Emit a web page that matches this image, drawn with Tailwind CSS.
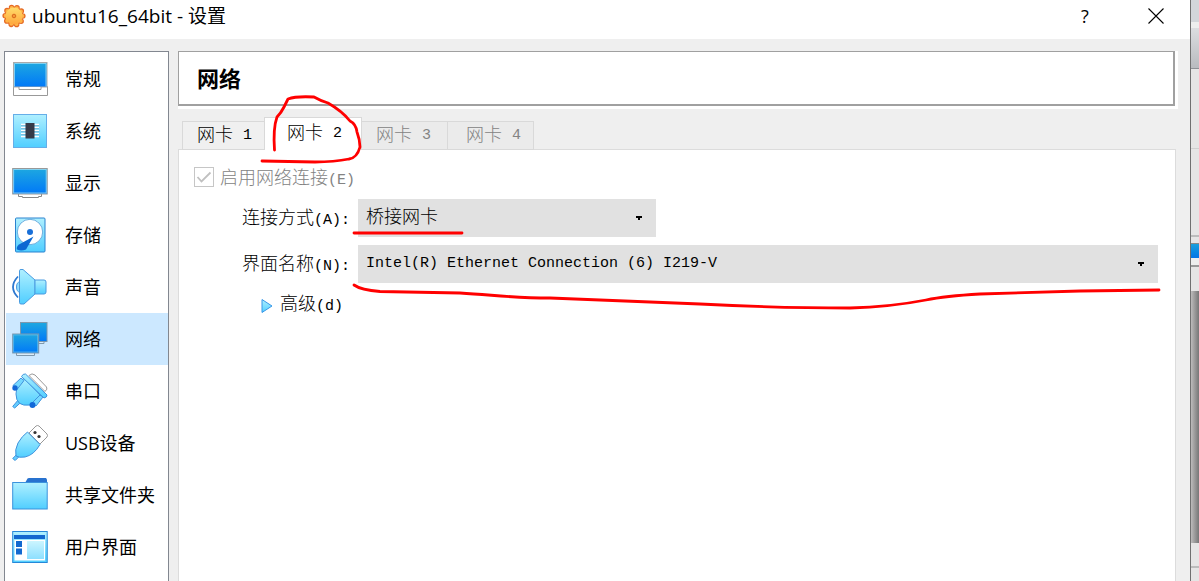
<!DOCTYPE html>
<html lang="zh-CN">
<head>
<meta charset="utf-8">
<title>ubuntu16_64bit - 设置</title>
<script src="https://cdn.jsdelivr.net/npm/@tailwindcss/browser@4"></script>
</head>
<body class="flex h-screen overflow-hidden bg-[#efefef] font-['Open_Sans','Noto_Sans_CJK_SC',sans-serif] text-lg leading-6 text-black">
<svg class="absolute size-0" aria-hidden="true">
  <defs>
    <linearGradient id="light" x1="0" y1="0" x2="0" y2="1"><stop offset="0" stop-color="#b0f0ff"/><stop offset="1" stop-color="#50ceff"/></linearGradient>
    <linearGradient id="screen" x1="0" y1="0" x2="0" y2="1"><stop offset="0" stop-color="#1ea8e0"/><stop offset="1" stop-color="#0078f8"/></linearGradient>
    <linearGradient id="gear" x1="0" y1="0" x2="0" y2="1"><stop offset="0" stop-color="#ffdc6a"/><stop offset="1" stop-color="#ffa63c"/></linearGradient>
  </defs>
</svg>

<div class="relative flex min-w-0 flex-1 flex-col border-r border-[#707070]">
  <header class="flex h-[39px] shrink-0 items-center bg-white pr-[26px] pb-2 pl-0.5">
    <svg class="mr-1.5 size-6" viewBox="0 0 24 24">
      <circle cx="12" cy="12" r="8.800" fill="none" stroke="#e56a25" stroke-width="5.600" stroke-linecap="round" stroke-dasharray="0 5.529"/>
      <circle cx="12" cy="12" r="8.300" fill="none" stroke="#ffb347" stroke-width="4" stroke-linecap="round" stroke-dasharray="0 5.215"/>
      <circle cx="12" cy="12" r="8.500" fill="url(#gear)"/>
      <circle cx="12" cy="12" r="1.800" fill="#f59a35" stroke="#d9661d"/>
    </svg>
    <h1 class="flex-1 text-[19px]">ubuntu16_64bit - 设置</h1>
    <button class="mr-[55px] w-4 text-center" aria-label="帮助">?</button>
    <button aria-label="关闭"><svg class="size-4" viewBox="0 0 16 16" fill="none" stroke="#000" stroke-width="1.1"><path d="M.5.5l15 15M15.5.5l-15 15"/></svg></button>
  </header>

  <div class="flex min-h-0 flex-1 pt-3 pl-1">
    <nav class="w-[165px] shrink-0 border border-b-0 border-[#828790] bg-white px-px pt-px pr-0">
      <a href="#general" class="flex h-[52px] items-center gap-[17px] pl-1.5"><svg class="size-9" viewBox="0 0 36 36"><path d="M1.500 25.500h34v9h-34z" fill="#fff" stroke="#999"/><rect x="1.500" y="1.500" width="33.500" height="24.500" fill="url(#screen)" stroke="#aaa"/><path d="M2.500 25.500V2.500H34V25.500" fill="none" stroke="#9adcf5" stroke-width=".8"/><path d="M7 26v2.500h22V26" fill="#fff" stroke="#999"/></svg>常规</a>
      <a href="#system" class="flex h-[52px] items-center gap-[17px] pl-1.5"><svg class="size-9" viewBox="0 0 36 36"><rect x="1.500" y="1.500" width="33" height="33" fill="url(#light)" stroke="#66aee8"/><path d="M9 11.500h18M9 14.500h18M9 17.500h18M9 20.500h18M9 23.500h18" stroke="#fff" stroke-width="1.600"/><path d="M9 12.700h18M9 15.700h18M9 18.700h18M9 21.700h18" stroke="#65a9ce" stroke-width=".8"/><rect x="13.500" y="10" width="9" height="15.500" fill="#343a48"/></svg>系统</a>
      <a href="#display" class="flex h-[52px] items-center gap-[17px] pl-1.5"><svg class="size-9" viewBox="0 0 36 36"><path d="M6.500 28.500v3h4v1h16v-1h3v-3" fill="#fff" stroke="#888"/><rect x=".7" y="3.500" width="34.500" height="25.500" fill="url(#screen)" stroke="#999"/><rect x="1.700" y="4.500" width="32.500" height="23.500" fill="none" stroke="#9adcf5" stroke-width=".8"/></svg>显示</a>
      <a href="#storage" class="flex h-[52px] items-center gap-[17px] pl-1.5"><svg class="size-9" viewBox="0 0 36 36"><rect x="3.500" y="1" width="29.500" height="34" rx="1" fill="url(#light)" stroke="#2b82cf"/><circle cx="18" cy="15" r="12.700" fill="#fff" stroke="#6aaee0"/><circle cx="18" cy="15" r="3" fill="#186fd8"/><path d="M21.500 19.500L7 27.500Q4 30 5 32.500Q9 34.500 14 32.500Z" fill="#0b68d2"/></svg>存储</a>
      <a href="#audio" class="flex h-[52px] items-center gap-[17px] pl-1.5"><svg class="size-9" viewBox="0 0 36 36" stroke="#4a9be0"><path d="M6 7.500Q-4 18 6 28.500" fill="none" stroke="#2d78d0" stroke-width="1.700"/><path d="M8 13Q4.500 13 4.500 18T8 23z" fill="#8fdcff"/><path d="M7.500 1.500Q7.500.5 9 .5h2L23 11v14L12 35H9Q7.500 35 7.500 33.500z" fill="url(#light)"/><path d="M23 11h9q2 0 2 2v10q0 2-2 2h-9z" fill="url(#light)"/></svg>声音</a>
      <a href="#network" aria-current="page" class="flex h-[52px] items-center gap-[17px] bg-[#cce8ff] pl-1.5"><svg class="size-9" viewBox="0 0 36 36" stroke="#7e98ad"><path d="M14 20v2.500h18V20" fill="#d8ecfa"/><rect x="8.500" y="1.500" width="26.500" height="19" fill="url(#screen)"/><path d="M4.500 32v2.500h18V32" fill="#d8ecfa"/><rect x=".7" y="13" width="26" height="19" fill="url(#screen)"/><rect x="1.700" y="14" width="24" height="17" fill="none" stroke="#65bfea" stroke-width=".7"/></svg>网络</a>
      <a href="#serial" class="flex h-[52px] items-center gap-[17px] pl-1.5"><svg class="size-9" viewBox="0 0 36 36" stroke="#3f93dd"><path d="M17 2.500q3-3 6-.5l11.500 12q1.500 2-1.500 4.500z" fill="#fff" stroke="#999"/><path d="M.7 33.500l5-6 2.500 2.500-5.500 5z" fill="#65ceff"/><path d="M12 5L29 23Q27 31 18 32Q4 34 4 21Q4 13 12 5z" fill="url(#light)"/><path d="M1 12.500l8-7.500 3 2.500-7 9z" fill="#75d8ff"/><path d="M20 30l8-8 3 2-7 9z" fill="#75d8ff"/><path d="M9.500 3.500q1.500-3 4-2.500L35 22q0 2.500-3 3z" fill="url(#light)"/><circle cx="3" cy="15" r="2.700" fill="#1268d8" stroke="none"/><circle cx="20.500" cy="32" r="3" fill="#1268d8" stroke="none"/></svg>串口</a>
      <a href="#usb" class="flex h-[52px] items-center gap-[17px] pl-1.5"><svg class="size-9" viewBox="0 0 36 36" stroke="#3f93dd"><path d="M17 8l7-7q1.500-1 3 0l8 8q1 1.500 0 3l-7 7z" fill="#fff" stroke="#999"/><circle cx="23" cy="7.500" r="1.600" fill="#333" stroke="none"/><circle cx="27" cy="11.500" r="1.600" fill="#333" stroke="none"/><path d="M.7 33.500l4-4 2.500 2-4 4z" fill="#65ceff"/><path d="M15.500 7L28 19.500Q22 30 13 32Q7 33 4 31Q2.500 25 6 18Q10 11 15.500 7z" fill="url(#light)"/></svg>USB设备</a>
      <a href="#shared" class="flex h-[52px] items-center gap-[17px] pl-1.5"><svg class="size-9" viewBox="0 0 36 36"><path d="M13 6l2.500-4.500Q16 1 17 1h17l1 1.500V7H13z" fill="#2872cf"/><rect x=".7" y="5.500" width="34.500" height="26.500" fill="url(#light)" stroke="#3b92dc"/></svg>共享文件夹</a>
      <a href="#interface" class="flex h-[52px] items-center gap-[17px] pl-1.5"><svg class="size-9" viewBox="0 0 36 36"><rect x=".7" y="2.500" width="34.500" height="31" fill="url(#light)" stroke="#2688d8"/><path d="M2.500 11h30.500v20.500H2.500z" fill="#fff"/><path d="M2 6h31v4H2zM4 12h6v6H4zM4 19.500h6v6H4z" fill="#1268cf"/><path d="M15 12h17v18H15z" fill="url(#light)" opacity=".65"/></svg>用户界面</a>
    </nav>

    <main class="ml-[9px] flex min-w-0 flex-1 flex-col pr-3">
      <div class="shrink-0 bg-white pr-[3px] pb-[3px]">
        <h2 class="border-t border-r-2 border-b-2 border-l border-[#a0a0a0] py-[13px] pl-[18px] text-[22px] leading-[26px] font-bold">网络</h2>
      </div>

      <div class="mr-0.5 flex min-h-0 flex-1 flex-col pt-2 font-['Liberation_Mono','Noto_Sans_CJK_SC',monospace] font-light">
        <div role="tablist" class="z-10 -mb-px flex items-end pl-1">
          <button role="tab" class="flex h-[29px] w-[82px] items-center gap-2.5 border border-r-0 border-[#d9d9d9] bg-[#f0f0f0] pl-3.5">网卡 <span class="text-[15px]">1</span></button>
          <button role="tab" aria-selected="true" class="flex h-[33px] w-[98px] items-center gap-2.5 border border-b-0 border-[#d9d9d9] bg-white pl-[22px]">网卡 <span class="text-[15px]">2</span></button>
          <button role="tab" disabled class="flex h-[29px] w-[86px] items-center gap-2.5 border border-l-0 border-[#d9d9d9] bg-[#ebebeb] pl-3.5 text-[#838383]">网卡 <span class="text-[15px]">3</span></button>
          <button role="tab" disabled class="flex h-[29px] w-[86px] items-center gap-2.5 border border-l-0 border-[#d9d9d9] bg-[#ebebeb] pl-[18px] text-[#838383]">网卡 <span class="text-[15px]">4</span></button>
        </div>

        <section class="flex flex-1 flex-col border border-b-0 border-[#dcdcdc] bg-white pt-[17px] pr-[17px] pl-[15px]">
          <label class="flex items-start gap-1.5 text-[#838383]">
            <span class="grid size-5 place-items-center">
              <input type="checkbox" checked disabled class="col-start-1 row-start-1 size-5 appearance-none border border-[#c6c6c6] bg-white">
              <svg class="col-start-1 row-start-1 size-4" viewBox="0 0 16 16" fill="none" stroke="#c0c0c0" stroke-width="1.800"><path d="M1.500 8l4 4.500 9-9"/></svg>
            </span>
            <span>启用网络连接<span class="text-[15px]">(E)</span></span>
          </label>

          <div class="mt-1.5 grid grid-cols-[107px_1fr] items-center gap-x-[9px] gap-y-2 pl-12">
            <label for="attached" class="pt-1 whitespace-nowrap">连接方式<span class="text-[15px]">(A):</span></label>
            <div class="grid w-[298px] items-center">
              <select id="attached" class="col-start-1 row-start-1 h-[38px] appearance-none bg-[#e1e1e1] pl-2"><option>桥接网卡</option></select>
              <svg class="pointer-events-none col-start-1 row-start-1 mr-3.5 h-1 w-1.5 justify-self-end" viewBox="0 0 6 4"><path d="M0 0h6v2H4v2H2V2H0z"/></svg>
            </div>
            <label for="adapter" class="pt-1 whitespace-nowrap">界面名称<span class="text-[15px]">(N):</span></label>
            <div class="grid items-center">
              <select id="adapter" class="col-start-1 row-start-1 h-[38px] appearance-none bg-[#e1e1e1] pl-2 text-[15px]"><option>Intel(R) Ethernet Connection (6) I219-V</option></select>
              <svg class="pointer-events-none col-start-1 row-start-1 mr-3.5 h-1 w-1.5 justify-self-end" viewBox="0 0 6 4"><path d="M0 0h6v2H4v2H2V2H0z"/></svg>
            </div>
          </div>

          <button aria-expanded="false" class="mt-2.5 ml-[67px] flex items-center gap-[7px] self-start">
            <svg class="h-4 w-3" viewBox="0 0 12 16"><path d="M1 1.500L11 8 1 14.500z" fill="url(#light)" stroke="#3897e8"/></svg>
            <span>高级<span class="text-[15px]">(d)</span></span>
          </button>
        </section>
      </div>
    </main>
  </div>

  <svg class="pointer-events-none absolute top-0 left-0 z-20 h-[581px] w-[1190px]" viewBox="0 0 1190 581" fill="none" stroke="#f00" stroke-width="2.800" stroke-linecap="round" stroke-linejoin="round" aria-hidden="true">
    <path d="M274.500 150Q273 128 277 117Q281 113 284 107L288 99Q296 96 314 97Q321 101 328 103Q342 111 350 121Q356 124 357 132Q360 140 360 147Q357 158 349 159Q334 162 315 162L262 161"/>
    <path d="M354 233h108"/>
    <path d="M354 285Q361 290 380 291.500L460 293C495 295 512 298 550 298L700 304Q780 308 850 308Q890 307 926 300Q945 296 980 294L1080 291L1159 290"/>
  </svg>
</div>

<div class="flex w-2 shrink-0 flex-col bg-[#e6e5e5]" aria-hidden="true">
  <div class="h-[22px] bg-[#d3d6da]"></div>
  <div class="h-1.5 bg-[#eeeeee]"></div>
  <div class="h-[41px] border-b border-[#8d9095] bg-linear-to-b from-[#dcdde0] to-[#b9bbbf]"></div>
  <div class="h-20 border-b border-[#d0d0d0]"></div>
  <div class="h-[88px] border-b-2 border-[#bcbcbc]"></div>
  <div class="h-[7px] border-b border-[#888888]"></div>
  <div class="h-[14px] bg-linear-to-b from-[#1b9fdc] to-[#0874e6]"></div>
  <div class="h-[9px] border-b-2 border-[#999999] bg-[#eeeeee]"></div>
  <div class="h-6"></div>
  <div class="h-[252px] bg-linear-to-r from-[#bdbbbb] to-[#777777]"></div>
  <div class="h-[25px] border-b-2 border-[#bcbcbc]"></div>
</div>
</body>
</html>
